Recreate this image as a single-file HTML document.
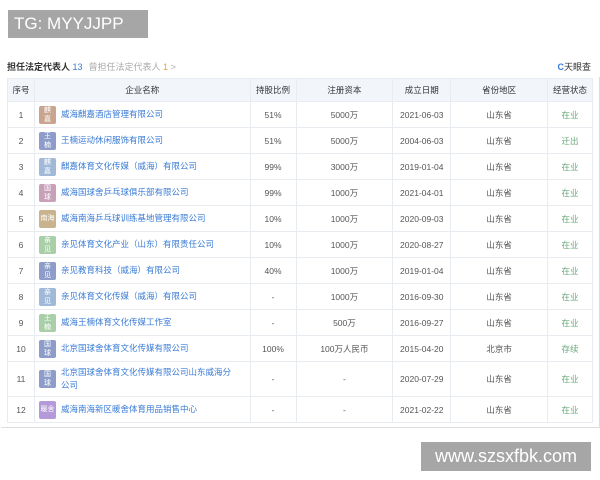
<!DOCTYPE html><html><head><meta charset="utf-8"><style>
body{margin:0;width:600px;height:480px;background:#fff;font-family:"Liberation Sans","Noto Sans CJK SC",sans-serif;position:relative;overflow:hidden}
.tg{position:absolute;left:8px;top:10px;width:140px;height:28px;background:#a6a6a6;color:#fff;font-size:17px;line-height:28px;padding-left:6px;box-sizing:border-box}
.wm{position:absolute;left:421px;top:442px;width:170px;height:29px;background:#a6a6a6;color:#fff;font-size:18px;line-height:29px;text-align:center}
.title{position:absolute;left:7px;top:60px;font-size:9px;color:#333;font-weight:bold}
.title .n{color:#3a7bd5;font-weight:normal}.title .g{color:#aaa;font-weight:normal;margin-left:6px}.title .o{color:#e8a33c}
.logo{position:absolute;right:9px;top:60px;font-size:9px;color:#333}
.logo b{color:#3a7bd5}
table{position:absolute;left:7px;top:78px;width:586px;border-collapse:collapse;font-size:8.5px;color:#555}
td,th{border:1px solid #e8ecf0;text-align:center;height:25px;padding:0}
th{background:#f2f6fb;font-weight:normal;color:#333;height:22px}
td.nm{text-align:left;color:#3a7bd5;padding-left:26px;padding-right:12px;position:relative;line-height:13px}
td.nm i{position:absolute;left:4px;top:50%;margin-top:-9px;width:17px;height:18px;border-radius:2px;font-style:normal;color:#fff;font-size:7px;line-height:9px;text-align:center;overflow:hidden;word-break:break-all;padding:0 4px;box-sizing:border-box}
.s{color:#6aa87a}
.wrap{position:absolute;left:1px;top:77px;width:598px;height:350px;border-bottom:1px solid #ddd;border-right:1px solid #ddd}
</style></head><body>
<div class="tg">TG: MYYJJPP</div>
<div class="title">担任法定代表人 <span class="n">13</span><span class="g">曾担任法定代表人 <span class="o">1</span> &gt;</span></div>
<div class="logo"><b>C</b>天眼查</div>
<div class="wrap"></div>
<table>
<colgroup><col style="width:27px"><col style="width:216px"><col style="width:46px"><col style="width:97px"><col style="width:58px"><col style="width:97px"><col style="width:45px"></colgroup>
<tr><th>序号</th><th>企业名称</th><th>持股比例</th><th>注册资本</th><th>成立日期</th><th>省份地区</th><th>经营状态</th></tr>
<tr><td>1</td><td class="nm"><i style="background:#c9a48f">麒嘉</i>威海麒嘉酒店管理有限公司</td><td>51%</td><td>5000万</td><td>2021-06-03</td><td>山东省</td><td class="s">在业</td></tr>
<tr><td>2</td><td class="nm"><i style="background:#8d9cc9">王楠</i>王楠运动休闲服饰有限公司</td><td>51%</td><td>5000万</td><td>2004-06-03</td><td>山东省</td><td class="s">迁出</td></tr>
<tr><td>3</td><td class="nm"><i style="background:#a0b9d8">麒嘉</i>麒嘉体育文化传媒（威海）有限公司</td><td>99%</td><td>3000万</td><td>2019-01-04</td><td>山东省</td><td class="s">在业</td></tr>
<tr><td>4</td><td class="nm"><i style="background:#c8a0b8">国球</i>威海国球舍乒乓球俱乐部有限公司</td><td>99%</td><td>1000万</td><td>2021-04-01</td><td>山东省</td><td class="s">在业</td></tr>
<tr><td>5</td><td class="nm"><i style="background:#c9b38f;padding:0;line-height:18px">南海</i>威海南海乒乓球训练基地管理有限公司</td><td>10%</td><td>1000万</td><td>2020-09-03</td><td>山东省</td><td class="s">在业</td></tr>
<tr><td>6</td><td class="nm"><i style="background:#a8cfa8">亲见</i>亲见体育文化产业（山东）有限责任公司</td><td>10%</td><td>1000万</td><td>2020-08-27</td><td>山东省</td><td class="s">在业</td></tr>
<tr><td>7</td><td class="nm"><i style="background:#8d9cc9">亲见</i>亲见教育科技（威海）有限公司</td><td>40%</td><td>1000万</td><td>2019-01-04</td><td>山东省</td><td class="s">在业</td></tr>
<tr><td>8</td><td class="nm"><i style="background:#a0b9d8">亲见</i>亲见体育文化传媒（威海）有限公司</td><td>-</td><td>1000万</td><td>2016-09-30</td><td>山东省</td><td class="s">在业</td></tr>
<tr><td>9</td><td class="nm"><i style="background:#a8cfa8">王楠</i>威海王楠体育文化传媒工作室</td><td>-</td><td>500万</td><td>2016-09-27</td><td>山东省</td><td class="s">在业</td></tr>
<tr><td>10</td><td class="nm"><i style="background:#8d9cc9">国球</i>北京国球舍体育文化传媒有限公司</td><td>100%</td><td>100万人民币</td><td>2015-04-20</td><td>北京市</td><td class="s">存续</td></tr>
<tr><td style="height:34px">11</td><td class="nm"><i style="background:#8d9cc9">国球</i>北京国球舍体育文化传媒有限公司山东威海分公司</td><td>-</td><td>-</td><td>2020-07-29</td><td>山东省</td><td class="s">在业</td></tr>
<tr><td>12</td><td class="nm"><i style="background:#b49ad8;padding:0;line-height:18px">暖舍</i>威海南海新区暖舍体育用品销售中心</td><td>-</td><td>-</td><td>2021-02-22</td><td>山东省</td><td class="s">在业</td></tr>
</table>
<div class="wm">www.szsxfbk.com</div>
</body></html>
